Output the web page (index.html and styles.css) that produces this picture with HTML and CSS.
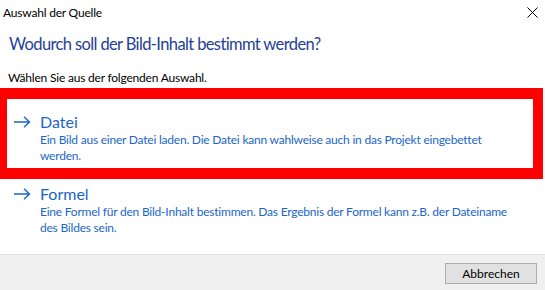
FILE: index.html
```html
<!DOCTYPE html>
<html lang="de">

<head>
  <meta charset="UTF-8" />
  <title>Auswahl der Quelle</title>
  <link rel="stylesheet" href="styles.css">
</head>

<body>

  <div class="dialog">
    <div class="titlebar">
      <span class="title">Auswahl der Quelle</span>
      <span class="close">
        <svg width="11" height="11" viewBox="0 0 11 11">
          <path d="M0.5 0.5 L10.5 10.5 M10.5 0.5 L0.5 10.5" stroke="#000" stroke-width="1" fill="none" />
        </svg>
      </span>
    </div>

    <div class="content">
      <h1 class="instruction">Wodurch soll der Bild-Inhalt bestimmt werden?</h1>
      <p class="hint">Wählen Sie aus der folgenden Auswahl.</p>

      <div class="options">
        <div class="option">
          <svg class="arrow" width="17" height="12" viewBox="0 0 17 12">
            <path d="M0 6 H15.5 M10 0.7 L15.5 6 L10 11.3" stroke="currentColor" stroke-width="1.4" fill="none" />
          </svg>
          <div class="option-text">
            <div class="option-title">Datei</div>
            <div class="option-desc">Ein Bild aus einer Datei laden. Die Datei kann wahlweise auch in das Projekt eingebettet werden.</div>
          </div>
        </div>
        <div class="option">
          <svg class="arrow" width="17" height="12" viewBox="0 0 17 12">
            <path d="M0 6 H15.5 M10 0.7 L15.5 6 L10 11.3" stroke="currentColor" stroke-width="1.4" fill="none" />
          </svg>
          <div class="option-text">
            <div class="option-title">Formel</div>
            <div class="option-desc">Eine Formel für den Bild-Inhalt bestimmen. Das Ergebnis der Formel kann z.B. der Dateiname des Bildes sein.</div>
          </div>
        </div>
      </div>
    </div>

    <div class="footer">
      <button class="btn">Abbrechen</button>
    </div>

    <!-- annotation -->
    <div class="highlight"></div>
  </div>

</body>

</html>
```

FILE: styles.css
```css
body {
  margin: 0;
  background: #fff;
  font-family: Lato, "Noto Sans", sans-serif;
  color: #000;
}

.dialog {
  position: relative;
  width: 545px;
  height: 290px;
  display: flex;
  flex-direction: column;
  overflow: hidden;
}

.titlebar {
  height: 24px;
  display: flex;
  align-items: center;
  justify-content: space-between;
  padding: 0 8px 0 3px;
  font-size: 12px;
  letter-spacing: -0.2px;
}

.close {
  display: flex;
  padding-top: 1px;
  margin-right: -1px;
}

.content {
  flex: 1;
  padding: 8px 9px 0 9px;
}

.instruction {
  margin: 0;
  font-size: 16.5px;
  letter-spacing: -0.62px;
  font-weight: normal;
  color: #1f4196;
  line-height: 24px;
}

.hint {
  margin: 14px 0 0 -1px;
  font-size: 12px;
  letter-spacing: -0.2px;
  line-height: 16px;
}

.options {
  margin-top: 26px;
}

.option {
  display: flex;
  gap: 9px;
  padding-left: 5px;
  color: #1a66c8;
}

.option + .option {
  margin-top: 20px;
}

.arrow {
  margin-top: 4px;
  flex: none;
}

.option-title {
  font-size: 16px;
  line-height: 20px;
}

.option-desc {
  font-size: 12px;
  letter-spacing: -0.22px;
  line-height: 16px;
  width: 472px;
}

.footer {
  height: 36px;
  background: #f0f0f0;
  border-top: 1px solid #dfdfdf;
  display: flex;
  justify-content: flex-end;
  align-items: center;
  padding-right: 8px;
  box-sizing: border-box;
}

.btn {
  width: 92px;
  height: 21px;
  background: #e1e1e1;
  border: 1px solid #adadad;
  font-family: inherit;
  font-size: 12px;
  padding: 0;
  margin-top: 2px;
}

.highlight {
  position: absolute;
  left: 0;
  top: 88px;
  width: 526px;
  height: 69px;
  border-style: solid;
  border-color: #ff0000;
  border-width: 11px 10px 11px 7px;
}
```
